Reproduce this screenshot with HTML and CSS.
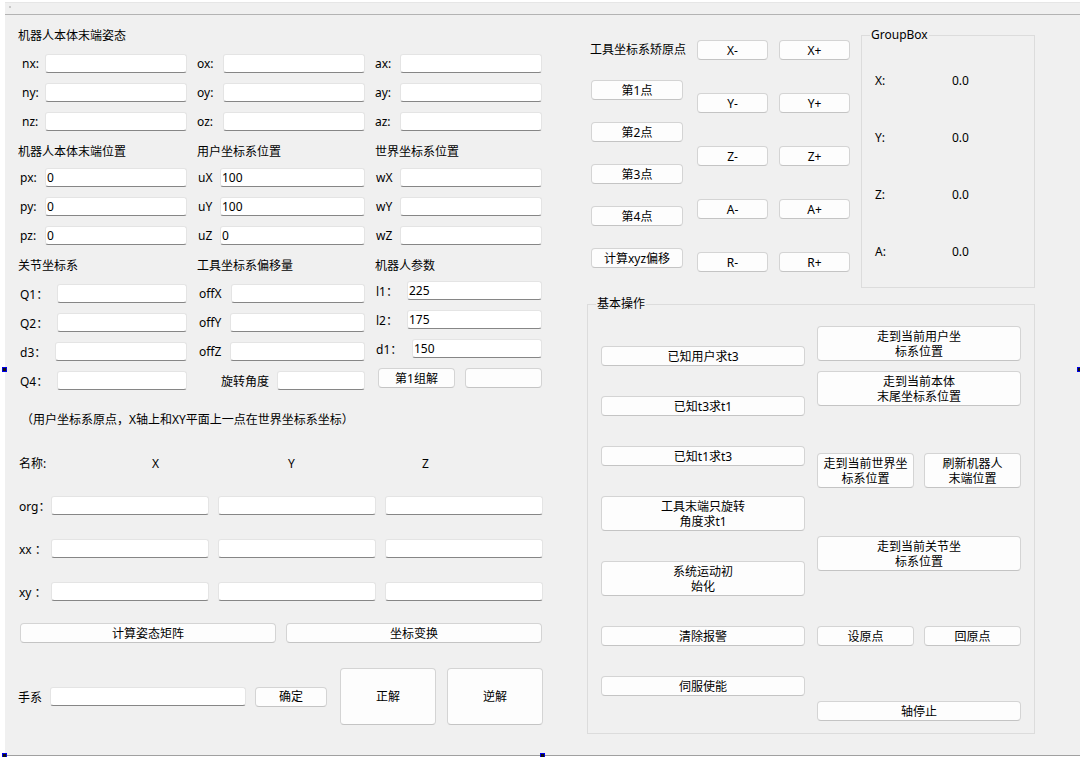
FILE: index.html
```html
<!DOCTYPE html>
<html lang="zh-CN">
<head>
  <meta charset="UTF-8" />
  <title>机器人坐标系标定</title>
  <link rel="stylesheet" href="styles.css">
</head>
<body>
  <div class="frame">
    <div class="strip"><span class="grip"></span></div>
    <div class="form">

      <!-- left side: poses, coordinates and solvers -->
      <div class="left">
        <div class="title">机器人本体末端姿态</div>
        <div class="cols pose">
          <div class="stack">
            <label class="field f-n"><span>nx:</span><input type="text"></label>
            <label class="field f-n"><span>ny:</span><input type="text"></label>
            <label class="field f-n"><span>nz:</span><input type="text"></label>
          </div>
          <div class="stack">
            <label class="field f-o"><span>ox:</span><input type="text"></label>
            <label class="field f-o"><span>oy:</span><input type="text"></label>
            <label class="field f-o"><span>oz:</span><input type="text"></label>
          </div>
          <div class="stack">
            <label class="field f-a"><span>ax:</span><input type="text"></label>
            <label class="field f-a"><span>ay:</span><input type="text"></label>
            <label class="field f-a"><span>az:</span><input type="text"></label>
          </div>
        </div>

        <div class="cols place">
          <div class="stack">
            <div class="title">机器人本体末端位置</div>
            <label class="field f-p"><span>px:</span><input type="text" value="0"></label>
            <label class="field f-p"><span>py:</span><input type="text" value="0"></label>
            <label class="field f-p"><span>pz:</span><input type="text" value="0"></label>
          </div>
          <div class="stack">
            <div class="title">用户坐标系位置</div>
            <label class="field f-u"><span>uX</span><input type="text" value="100"></label>
            <label class="field f-u"><span>uY</span><input type="text" value="100"></label>
            <label class="field f-u"><span>uZ</span><input type="text" value="0"></label>
          </div>
          <div class="stack">
            <div class="title">世界坐标系位置</div>
            <label class="field f-w"><span>wX</span><input type="text"></label>
            <label class="field f-w"><span>wY</span><input type="text"></label>
            <label class="field f-w"><span>wZ</span><input type="text"></label>
          </div>
        </div>

        <div class="cols joint">
          <div class="stack">
            <div class="title">关节坐标系</div>
            <label class="field f-q"><span>Q1：</span><input type="text"></label>
            <label class="field f-q"><span>Q2：</span><input type="text"></label>
            <label class="field f-d3"><span>d3：</span><input type="text"></label>
            <label class="field f-q"><span>Q4：</span><input type="text"></label>
          </div>
          <div class="stack">
            <div class="title">工具坐标系偏移量</div>
            <label class="field f-offx"><span>offX</span><input type="text"></label>
            <label class="field f-off"><span>offY</span><input type="text"></label>
            <label class="field f-off"><span>offZ</span><input type="text"></label>
            <label class="field f-rot"><span>旋转角度</span><input type="text"></label>
          </div>
          <div class="stack params">
            <div class="title">机器人参数</div>
            <label class="field f-l"><span>l1：</span><input type="text" value="225"></label>
            <label class="field f-l"><span>l2：</span><input type="text" value="175"></label>
            <label class="field f-d1"><span>d1：</span><input type="text" value="150"></label>
            <div class="pair">
              <button class="btn">第1组解</button>
              <button class="btn"></button>
            </div>
          </div>
        </div>

        <p class="note">（用户坐标系原点，X轴上和XY平面上一点在世界坐标系坐标）</p>

        <div class="coords">
          <span>名称:</span><span class="hx">X</span><span class="hy">Y</span><span class="hz">Z</span>
          <span>org：</span><input type="text"><input type="text"><input type="text">
          <span>xx ：</span><input type="text"><input type="text"><input type="text">
          <span>xy ：</span><input type="text"><input type="text"><input type="text">
        </div>

        <div class="actions">
          <button class="btn">计算姿态矩阵</button>
          <button class="btn">坐标变换</button>
        </div>

        <div class="hand">
          <span class="hand-label">手系</span>
          <input type="text">
          <button class="btn ok">确定</button>
          <button class="btn big">正解</button>
          <button class="btn big">逆解</button>
        </div>
      </div>

      <!-- right side: tool calibration, readout and basic operations -->
      <div class="right">
        <div class="top">
          <div class="tools">
            <div class="tool-left">
              <div class="tool-title">工具坐标系矫原点</div>
              <button class="btn">第1点</button>
              <button class="btn">第2点</button>
              <button class="btn">第3点</button>
              <button class="btn">第4点</button>
              <button class="btn">计算xyz偏移</button>
            </div>
            <div class="jog">
              <button class="btn">X-</button><button class="btn">X+</button>
              <button class="btn">Y-</button><button class="btn">Y+</button>
              <button class="btn">Z-</button><button class="btn">Z+</button>
              <button class="btn">A-</button><button class="btn">A+</button>
              <button class="btn">R-</button><button class="btn">R+</button>
            </div>
          </div>

          <fieldset class="group readout">
            <legend>GroupBox</legend>
            <div class="readout-body">
              <div class="reading"><span>X:</span><span>0.0</span></div>
              <div class="reading"><span>Y:</span><span>0.0</span></div>
              <div class="reading"><span>Z:</span><span>0.0</span></div>
              <div class="reading"><span>A:</span><span>0.0</span></div>
            </div>
          </fieldset>
        </div>

        <fieldset class="group ops">
          <legend>基本操作</legend>
          <div class="ops-body">
            <div class="ops-col ops-main">
              <button class="btn">已知用户求t3</button>
              <button class="btn">已知t3求t1</button>
              <button class="btn">已知t1求t3</button>
              <button class="btn tall">工具末端只旋转<br>角度求t1</button>
              <button class="btn tall">系统运动初<br>始化</button>
              <button class="btn">清除报警</button>
              <button class="btn">伺服使能</button>
            </div>
            <div class="ops-col ops-side">
              <button class="btn tall">走到当前用户坐<br>标系位置</button>
              <button class="btn tall g10">走到当前本体<br>末尾坐标系位置</button>
              <div class="split g47">
                <button class="btn tall">走到当前世界坐<br>标系位置</button>
                <button class="btn tall">刷新机器人<br>末端位置</button>
              </div>
              <button class="btn tall g48">走到当前关节坐<br>标系位置</button>
              <div class="split g55">
                <button class="btn">设原点</button>
                <button class="btn">回原点</button>
              </div>
              <button class="btn g55">轴停止</button>
            </div>
          </div>
        </fieldset>
      </div>
    </div>
  </div>

  <!-- resize handles of the selected form -->
  <i class="handle h-left"></i>
  <i class="handle h-right"></i>
  <i class="handle h-bottom-left"></i>
  <i class="handle h-bottom-mid"></i>
</body>
</html>
```

FILE: styles.css
```css
* {
  box-sizing: border-box;
}

body {
  margin: 0;
  position: relative;
  height: 757px;
  overflow: hidden;
  background: #fff;
  color: #000;
  font-family: "Noto Sans", "Noto Sans CJK SC", sans-serif;
  font-size: 12px;
}

.frame {
  margin-left: 5px;
  width: 1075px;
}

.strip {
  margin-top: 2px;
  height: 13px;
  padding: 3px 0 0 4px;
  background: #f0f0f0;
  border-top: 1px solid #e6e6e6;
  border-bottom: 1px solid #b3b3b3;
}

.grip {
  display: block;
  width: 2px;
  height: 2px;
  background: #c8c8c8;
}

.form {
  display: flex;
  height: 741px;
  background: #f0f0f0;
  border-bottom: 1px solid #a0a0a0;
}

/* inputs and buttons */
input {
  width: 100%;
  min-width: 0;
  height: 19px;
  padding: 0 1px;
  font: inherit;
  color: #000;
  background: #fff;
  border: 1px solid #e4e4e4;
  border-bottom-color: #868686;
  border-radius: 3px;
  outline: none;
}

.btn {
  height: 20px;
  padding: 0;
  font: inherit;
  line-height: 15px;
  color: #000;
  background: #fdfdfd;
  border: 1px solid #d4d4d4;
  border-bottom-color: #c4c4c4;
  border-radius: 4px;
  white-space: nowrap;
}

.btn.tall {
  height: 35px;
}

/* left side */
.left {
  width: 540px;
  flex: none;
  padding: 12px 0 0 13px;
}

.title {
  height: 18px;
  line-height: 18px;
  white-space: nowrap;
}

.cols {
  display: grid;
  grid-template-columns: 169px 168px 167px;
  column-gap: 10px;
}

.pose { margin-top: 9px; }
.place { margin-top: 12px; }
.joint { margin-top: 12px; }

.place .title { margin-bottom: 7px; }
.joint .title { margin-bottom: 9px; }
.joint .params .title { margin-bottom: 6px; }

.stack {
  display: flex;
  flex-direction: column;
}

.field {
  display: grid;
  grid-template-columns: var(--lw) 1fr;
  align-items: center;
  height: 19px;
}

.field + .field {
  margin-top: 10px;
}

.field span {
  padding-left: var(--pad, 0);
  white-space: nowrap;
}

.f-n { --lw: 27px; --pad: 4px; }
.f-o { --lw: 26px; }
.f-a { --lw: 25px; }
.f-p { --lw: 27px; --pad: 2px; }
.f-u { --lw: 23px; --pad: 1px; }
.f-w { --lw: 25px; --pad: 1px; }
.f-q { --lw: 39px; --pad: 2px; }
.f-d3 { --lw: 37px; --pad: 2px; }
.f-offx { --lw: 34px; --pad: 2px; }
.f-off { --lw: 33px; --pad: 2px; }
.f-rot { --lw: 80px; --pad: 24px; }
.f-l { --lw: 32px; --pad: 1px; }
.f-d1 { --lw: 37px; --pad: 1px; }

.pair {
  display: flex;
  gap: 10px;
  margin-top: 10px;
  padding-left: 3px;
}

.pair .btn {
  width: 77px;
}

.note {
  margin: 21px 0 0;
  padding-left: 3px;
  height: 18px;
  line-height: 18px;
  white-space: nowrap;
}

.coords {
  display: grid;
  grid-template-columns: 24px repeat(3, 158px);
  grid-auto-rows: 19px;
  grid-template-rows: 18px;
  column-gap: 9px;
  row-gap: 24px;
  align-items: center;
  margin-top: 25px;
}

.coords span {
  padding-left: 1px;
  white-space: nowrap;
}

.coords .hx { padding-left: 101px; }
.coords .hy { padding-left: 70px; }
.coords .hz { padding-left: 37px; }

.actions {
  display: grid;
  grid-template-columns: 256px 256px;
  column-gap: 10px;
  margin-top: 22px;
  padding-left: 2px;
}

.hand {
  display: flex;
  align-items: center;
  margin-top: 25px;
}

.hand-label {
  width: 32px;
  flex: none;
}

.hand input {
  width: 196px;
  flex: none;
}

.hand .ok {
  width: 72px;
  margin-left: 9px;
}

.hand .big {
  width: 96px;
  height: 57px;
  margin-left: 13px;
}

.hand .big + .big {
  margin-left: 11px;
}

/* right side */
.right {
  margin-left: 42px;
  width: 448px;
  flex: none;
}

.top {
  display: flex;
  align-items: flex-start;
}

.tools {
  display: flex;
  gap: 11px;
  margin: 25px 0 0 3px;
}

.tool-left {
  display: flex;
  flex-direction: column;
  width: 96px;
}

.tool-title {
  height: 20px;
  line-height: 20px;
  white-space: nowrap;
}

.tool-left .btn {
  width: 92px;
  margin: 22px 0 0 1px;
}

.tool-left .tool-title + .btn {
  margin-top: 20px;
}

.jog {
  display: grid;
  grid-template-columns: 71px 71px;
  grid-auto-rows: 20px;
  column-gap: 11px;
  row-gap: 33px;
}

.group {
  margin: 0;
  padding: 0;
  min-width: 0;
  border: 1px solid #dcdcdc;
}

.group legend {
  margin-left: 8px;
  padding: 0 1px;
  line-height: 16px;
}

.readout {
  width: 174px;
  margin: 12px 0 0 11px;
}

.readout-body {
  display: flex;
  flex-direction: column;
  gap: 37px;
  padding: 27px 0 26px 13px;
}

.reading {
  display: flex;
  height: 20px;
  align-items: center;
}

.reading span:first-child {
  width: 77px;
}

.ops {
  width: 448px;
  margin-top: 8px;
}

.ops-body {
  display: flex;
  gap: 12px;
  padding: 14px 13px 12px;
}

.ops-col {
  display: flex;
  flex-direction: column;
  width: 204px;
}

.ops-main {
  margin-top: 20px;
  gap: 30px;
}

.split {
  display: flex;
  gap: 10px;
}

.split .btn {
  width: 97px;
}

.g10 { margin-top: 10px; }
.g47 { margin-top: 47px; }
.g48 { margin-top: 48px; }
.g55 { margin-top: 55px; }

/* designer selection handles */
.handle {
  position: absolute;
  width: 5px;
  height: 5px;
  background: #111;
  border: 1px solid #0000e6;
}

.h-left { left: 2px; top: 367px; }
.h-right { left: 1077px; top: 367px; }
.h-bottom-left { left: 2px; top: 753px; }
.h-bottom-mid { left: 540px; top: 753px; }
```
